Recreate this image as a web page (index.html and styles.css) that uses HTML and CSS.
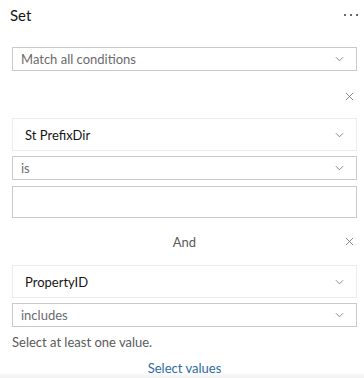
FILE: index.html
```html
<!DOCTYPE html>
<html lang="en">
  <head>
    <meta charset="UTF-8" />
    <title>Set</title>
    <link rel="stylesheet" href="styles.css">
  </head>
  <body>
    <header class="topbar">
      <h1>Set</h1>
      <span class="more"><i></i><i></i><i></i></span>
    </header>

    <main class="panel">
      <div class="select match">
        <span>Match all conditions</span>
        <svg class="chev" viewBox="0 0 10 6"><path d="M1 1l4 4 4-4" /></svg>
      </div>

      <div class="row-close first">
        <svg class="close" viewBox="0 0 10 10"><path d="M1 1l8 8M9 1l-8 8" /></svg>
      </div>

      <div class="field">
        <span>St PrefixDir</span>
        <svg class="chev" viewBox="0 0 10 6"><path d="M1 1l4 4 4-4" /></svg>
      </div>
      <div class="select op">
        <span>is</span>
        <svg class="chev" viewBox="0 0 10 6"><path d="M1 1l4 4 4-4" /></svg>
      </div>
      <div class="input"></div>

      <div class="row-close and">
        <span class="label">And</span>
        <svg class="close" viewBox="0 0 10 10"><path d="M1 1l8 8M9 1l-8 8" /></svg>
      </div>

      <div class="field">
        <span>PropertyID</span>
        <svg class="chev" viewBox="0 0 10 6"><path d="M1 1l4 4 4-4" /></svg>
      </div>
      <div class="select op">
        <span>includes</span>
        <svg class="chev" viewBox="0 0 10 6"><path d="M1 1l4 4 4-4" /></svg>
      </div>
      <p class="hint">Select at least one value.</p>
      <a class="link" href="#">Select values</a>
    </main>
    <div class="fade"></div>
  </body>
</html>
```

FILE: styles.css
```css
* {
  box-sizing: border-box;
}

body {
  margin: 0;
  width: 364px;
  height: 378px;
  overflow: hidden;
  background: #fff;
  font-family: Lato, "Open Sans", sans-serif;
  color: #4a4a4a;
  font-size: 13px;
  line-height: 16px;
  position: relative;
}

.topbar {
  display: flex;
  justify-content: space-between;
  align-items: center;
  height: 30px;
  padding: 0 6px 0 10px;
}

.topbar h1 {
  margin: 0;
  font-size: 15px;
  font-weight: 400;
  color: #151515;
}

.more {
  display: flex;
  gap: 4px;
}

.more i {
  width: 2px;
  height: 2px;
  background: #6a6a6a;
}

.panel {
  padding: 17px 7px 0 12px;
  display: flex;
  flex-direction: column;
}

.select,
.field,
.input {
  display: flex;
  align-items: center;
  justify-content: space-between;
  border: 1px solid #cacaca;
  padding: 0 12px 0 8px;
  flex-shrink: 0;
}

.select {
  height: 24px;
}

.select span {
  color: #6b6b6b;
}

.field {
  height: 33px;
  border-color: #ececec;
  padding-left: 12px;
  color: #151515;
}

.op {
  margin-top: 5px;
}

.input {
  height: 32px;
  margin-top: 6px;
}

.chev {
  width: 9px;
  height: 6px;
  fill: none;
  stroke: #7a7a7a;
  stroke-width: 1;
}

.row-close {
  display: flex;
  align-items: center;
  justify-content: flex-end;
  height: 18px;
  padding-right: 3px;
  flex-shrink: 0;
}

.row-close.first {
  margin: 16px 0 13px;
}

.row-close.and {
  margin: 14px 0 15px;
  position: relative;
}

.row-close .label {
  position: absolute;
  left: 0;
  right: 0;
  top: 1px;
  line-height: 18px;
  text-align: center;
  color: #5a5a5a;
}

.close {
  width: 9px;
  height: 9px;
  fill: none;
  stroke: #6a6a6a;
  stroke-width: 0.9;
}

.hint {
  margin: 7px 0 0;
  color: #5a5a5a;
}

.link {
  margin-top: 10px;
  align-self: center;
  color: #2e6aa8;
  text-decoration: none;
}

.fade {
  position: absolute;
  left: 0;
  right: 0;
  bottom: 0;
  height: 6px;
  background: linear-gradient(to bottom, rgba(0, 0, 0, 0), rgba(0, 0, 0, 0.06));
}
```
